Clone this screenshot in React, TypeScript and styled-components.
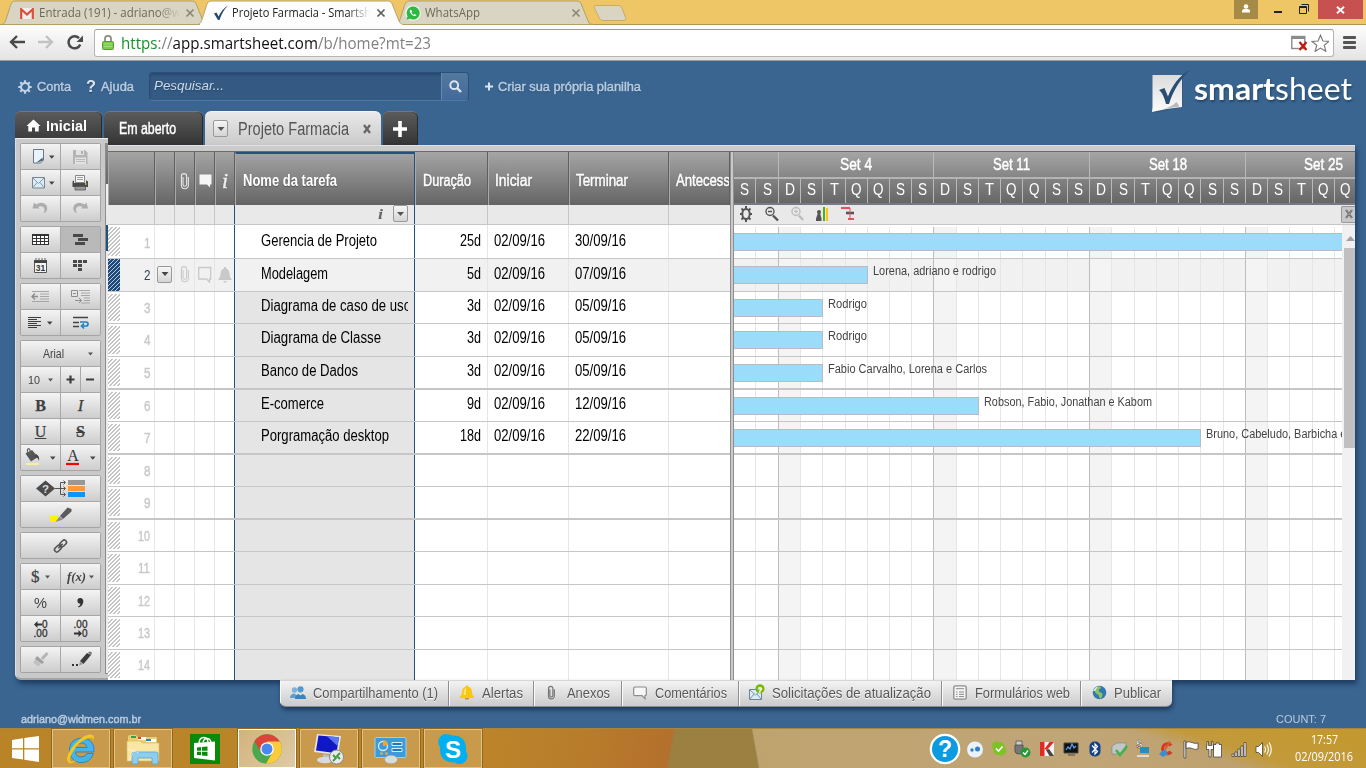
import React, { useLayoutEffect, useRef } from 'react';
import styled, { createGlobalStyle, css } from 'styled-components';

const ARIAL = '"Liberation Sans", Arial, sans-serif';
const SEGOE = '"Open Sans", "Noto Sans", sans-serif';
const SERIF = '"Liberation Serif", serif';

const Global = createGlobalStyle`
  *{box-sizing:border-box}
  html,body{margin:0;padding:0}
  body{width:1366px;height:768px;overflow:hidden;font-family:${ARIAL};font-size:12px}
  svg{display:block;flex:none}
`;

/* ---------- condensed text ---------- */
const FitBox = styled.span<{ $w: number }>`
  display: block;
  flex: none;
  width: ${p => p.$w}px;
  white-space: nowrap;
`;
const FitInner = styled.span<{ $size: number; $bold?: boolean; $italic?: boolean; $color?: string; $font?: string; $semi?: boolean }>`
  display: inline-block;
  transform-origin: 0 50%;
  line-height: 20px;
  font-family: ${p => p.$font || ARIAL};
  font-size: ${p => p.$size}px;
  font-weight: ${p => (p.$bold ? 700 : 400)};
  font-style: ${p => (p.$italic ? 'italic' : 'normal')};
  ${p => p.$semi && css`-webkit-text-stroke: .45px currentColor;`}
  ${p => p.$color && css`color: ${p.$color};`}
`;
type FitProps = { w: number; size: number; bold?: boolean; semi?: boolean; italic?: boolean; color?: string; font?: string; children: React.ReactNode };
function Fit({ w, size, bold, semi, italic, color, font, children }: FitProps) {
  const ref = useRef<HTMLSpanElement>(null);
  useLayoutEffect(() => {
    const el = ref.current;
    if (!el) return;
    el.style.transform = 'none';
    el.style.transform = `scaleX(${w / el.getBoundingClientRect().width})`;
  }, [w]);
  return (
    <FitBox $w={w}>
      <FitInner ref={ref} $size={size} $bold={bold} $semi={semi} $italic={italic} $color={color} $font={font}>{children}</FitInner>
    </FitBox>
  );
}

/* ---------- browser chrome ---------- */
const Screen = styled.div`
  width: 1366px; height: 768px; display: flex; flex-direction: column; overflow: hidden; background: #3a6591;
`;
const TabStrip = styled.div`
  height: 25px; flex: none; background: #efc666; display: flex; align-items: flex-start;
  border-bottom: 1px solid #b09350;
`;
const BrowserTab = styled.div<{ $w: number; $ml: number; $z?: number }>`
  display: grid; width: ${p => p.$w}px; height: 25px; margin-left: ${p => p.$ml}px; z-index: ${p => p.$z || 0};
  & > * { grid-area: 1 / 1; }
`;
const BrowserTabBody = styled.div<{ $pl: number; $gap: number }>`
  display: flex; align-items: center; padding: 1px 0 0 ${p => p.$pl}px; gap: ${p => p.$gap}px; z-index: 1;
`;
const FadeText = styled.div<{ $w: number; $fade?: boolean }>`
  width: ${p => p.$w}px; overflow: hidden; margin-top: -1px;
  ${p => p.$fade && css`mask-image: linear-gradient(90deg, #000 84%, transparent);`}
`;
const StripSpace = styled.div`flex: 1;`;
const WindowButtons = styled.div`display: flex; margin-right: 3px;`;
const UserButton = styled.div`
  width: 24px; height: 19px; background: #a68b47; display: flex; justify-content: center; margin-right: 10px;
`;
const CloseWindow = styled.div`width: 45px; height: 19px; background: #c75050; display: flex; align-items: center; justify-content: center;`;
const NavBar = styled.div`
  height: 36px; flex: none; display: flex; align-items: center; background: linear-gradient(#fdfdfd, #e4e4e4);
  border-bottom: 1px solid #9d9d9d; padding: 0 10px 0 9px;
`;
const NavIcons = styled.div`display: flex; gap: 13px; width: 85px;`;
const Omnibox = styled.div`
  width: 1240px; height: 28px; background: #fff; border: 1px solid #b4b4b4; border-top-color: #9b9b9b; border-radius: 3px;
  display: flex; align-items: center; padding: 0 4px 0 7px; margin-right: 9px;
`;
const UrlBox = styled.div`flex: 1; padding-left: 7px; color: #808080;`;
const Green = styled.span`color: #17922b;`;
const Black = styled.span`color: #111;`;

function TabShape({ w, active }: { w: number; active?: boolean }) {
  return (
    <svg width={w} height={25} viewBox={`0 0 ${w} 25`}>
      <path d={`M0 24.5 C4 24 4 22 5.500 18 L9 7 C10.500 2.500 11 1.500 14 1 H${w - 17} C${w - 14} 1 ${w - 13} 3 ${w - 12} 6 L${w - 6} 21 C${w - 5} 24 ${w - 3} 24.500 ${w} 24.500 Z`}
        fill={active ? '#fdfdfd' : '#dad5c3'} stroke={active ? '#b9a46b' : '#b39f6a'} />
      {active && <path d={`M3 24.500H${w - 3}`} stroke="#fdfdfd" strokeWidth="1.500" />}
    </svg>
  );
}
const TabX = ({ c = '#8c8877' }) => (
  <svg width="10" height="10" viewBox="0 0 10 10"><path d="M1.500 1.500L8.500 8.500M8.500 1.500L1.500 8.500" stroke={c} strokeWidth="1.700" /></svg>
);

function Browser() {
  return (
    <>
      <TabStrip>
        <BrowserTab $w={208} $ml={1}>
          <TabShape w={208} />
          <BrowserTabBody $pl={19} $gap={5}>
            <svg width="14" height="11" viewBox="0 0 14 11"><path d="M1 0h12v11H1z" fill="#f3efe8" /><path d="M1.200 11V1.200L7 6.500 12.800 1.200V11" fill="none" stroke="#d8503f" strokeWidth="2.200" /></svg>
            <FadeText $w={141} $fade><Fit w={142} size={12} font={SEGOE} color="#6b6858">Entrada (191) - adriano@w</Fit></FadeText>
            <TabX />
          </BrowserTabBody>
        </BrowserTab>
        <BrowserTab $w={208} $ml={-12} $z={2}>
          <TabShape w={208} active />
          <BrowserTabBody $pl={16} $gap={3}>
            <svg width="16" height="16" viewBox="0 0 16 16"><path d="M1 8.500L3.500 7.500 5.500 11.500C8 6.500 11 3 15 .5 11 4.500 8.500 9 6.500 15H5Z" fill="#23476d" /></svg>
            <FadeText $w={138} $fade><Fit w={139} size={12} font={SEGOE} color="#222">Projeto Farmacia - Smartsh</Fit></FadeText>
            <i /><TabX c="#5c5c5c" />
          </BrowserTabBody>
        </BrowserTab>
        <BrowserTab $w={199} $ml={-10}>
          <TabShape w={199} />
          <BrowserTabBody $pl={10} $gap={4}>
            <svg width="16" height="16" viewBox="0 0 16 16"><circle cx="8" cy="8" r="7.800" fill="#f2f5e8" /><path d="M1.500 14.500L2.500 11.200A6.500 6.500 0 1 1 5 13.700Z" fill="#2fb943" /><path d="M5.500 4.500c-1.500 1-.3 3.500 1.200 5s3.800 2.300 4.800.8l-1.700-1.300-.9.800c-1-.4-1.900-1.300-2.400-2.400l.8-.9Z" fill="#fff" /></svg>
            <FadeText $w={142}><Fit w={55} size={12} font={SEGOE} color="#6b6858">WhatsApp</Fit></FadeText>
            <TabX />
          </BrowserTabBody>
        </BrowserTab>
        <svg width="34" height="25" viewBox="0 0 34 25"><path d="M1.500 5.500H24.500Q27 5.500 28 8L32 18.500Q32 20.500 30 20.500H8.500Q6.500 20.500 5.500 18.500L0 7Q-.3 5.500 1.500 5.500Z" fill="#dad5c3" stroke="#c6ab63" /></svg>
        <StripSpace />
        <WindowButtons>
          <UserButton><svg width="10" height="19" viewBox="0 0 10 19"><circle cx="5" cy="6.500" r="2.300" fill="#fff" /><path d="M1 12.500V11Q1 9 3.200 9H6.800Q9 9 9 11V12.500Z" fill="#fff" /></svg></UserButton>
          <svg width="50" height="19" viewBox="0 0 50 19"><path d="M6 12h8" stroke="#222" strokeWidth="2" /><path d="M31.500 6.500h7v7h-7zM31 7.500h8" fill="none" stroke="#222" /><path d="M33.500 4.500H40.500V11.500" fill="none" stroke="#222" /></svg>
          <CloseWindow><svg width="9" height="8" viewBox="0 0 9 8"><path d="M1 .7L8 7.300M8 .7L1 7.300" stroke="#fff" strokeWidth="1.900" /></svg></CloseWindow>
        </WindowButtons>
      </TabStrip>
      <NavBar>
        <NavIcons>
          <svg width="16" height="14" viewBox="0 0 16 14"><path d="M8 1L2 7l6 6M2 7H16" fill="none" stroke="#4a4a4a" strokeWidth="2.400" /></svg>
          <svg width="16" height="14" viewBox="0 0 16 14"><path d="M8 1l6 6-6 6M14 7H0" fill="none" stroke="#c2c2c2" strokeWidth="2.400" /></svg>
          <svg width="17" height="15" viewBox="0 0 17 15"><path d="M13.200 9.500A6 6 0 1 1 12 3.200" fill="none" stroke="#4a4a4a" strokeWidth="2.500" /><path d="M16 .5V7H9.500Z" fill="#4a4a4a" /></svg>
        </NavIcons>
        <Omnibox>
          <svg width="12" height="15" viewBox="0 0 12 15"><path d="M3 7V3.800a3 3 0 0 1 6 0V7" fill="none" stroke="#8a8f86" strokeWidth="1.800" /><rect x=".5" y="6.500" width="11" height="8" rx="1" fill="#7cc94c" stroke="#5a9e33" /><path d="M2 9h8M2 11.500h8" stroke="#a4e07c" /></svg>
          <UrlBox><Fit w={310} size={16} font={SEGOE}><Green>https</Green>://<Black>app.smartsheet.com</Black>/b/home?mt=23</Fit></UrlBox>
          <svg width="38" height="18" viewBox="0 0 38 18"><rect x=".8" y="2.500" width="13" height="12" fill="#fff" stroke="#8b8b8b" strokeWidth="1.400" /><path d="M.5 3.500h13.600" stroke="#8b8b8b" strokeWidth="3" /><path d="M8.500 8l7 8M15.500 8l-7 8" stroke="#c4180c" strokeWidth="2.200" /><path d="M29.500 1.200L31.900 7l6 .4-4.600 3.900 1.500 6-5.300-3.200-5.300 3.200 1.500-6L21.100 7.400l6-.4Z" fill="#fff" stroke="#7d7d7d" strokeWidth="1.200" /></svg>
        </Omnibox>
        <svg width="13" height="13" viewBox="0 0 13 13"><path d="M1 1.500h11M1 6.500h11M1 11.500h11" stroke="#555" strokeWidth="2.800" strokeLinecap="round" /></svg>
      </NavBar>
    </>
  );
}

/* ---------- application header ---------- */
const AppHeader = styled.div`height: 50px; flex: none; display: flex; align-items: center; padding: 1px 14px 0 18px; text-shadow: 0 1px 1px #23466b;`;
const HeaderLink = styled.div<{ $mr: number; $gap: number }>`display: flex; align-items: center; gap: ${p => p.$gap}px; margin-right: ${p => p.$mr}px; color: #b9cbde;`;
const SearchBox = styled.div`
  display: flex; width: 320px; height: 29px; border: 1px solid #2b4f78; border-bottom-color: #4d79a5; border-radius: 4px; background: #345983;
  box-shadow: inset 0 2px 2px rgba(20, 45, 80, .35); padding-left: 4px; margin-right: 16px; overflow: hidden; justify-content: space-between;
`;
const SearchText = styled.div`padding-top: 3px;`;
const SearchButton = styled.div`width: 27px; background: linear-gradient(#54799f, #41699a); border-left: 1px solid #6488ae; display: flex; align-items: center; justify-content: center;`;
const Brand = styled.div`margin-left: auto; display: flex; align-items: center; height: 50px; padding-top: 6px;`;
const BrandText = styled.div`display: flex; color: #fff; padding-top: 2px; text-shadow: 1px 2px 2px #264768; height: 32px; align-items: center;`;

const Magnifier = ({ c = '#dbe5ef', s = 13 }) => (
  <svg width={s} height={s} viewBox="0 0 13 13"><circle cx="5.200" cy="5.200" r="3.900" fill="none" stroke={c} strokeWidth="2" /><path d="M8 8l4 4" stroke={c} strokeWidth="2.400" /></svg>
);
const Gear = ({ c = '#c3d3e4', s = 15 }) => (
  <svg width={s} height={s} viewBox="0 0 15 15">
    <circle cx="7.500" cy="7.500" r="4.300" fill="none" stroke={c} strokeWidth="2.200" />
    <path d="M7.500 .3V3M7.500 12V14.700M.3 7.500H3M12 7.500H14.700M2.400 2.400L4.300 4.300M10.700 10.700L12.600 12.600M2.400 12.600L4.300 10.700M10.700 4.300L12.600 2.400" stroke={c} strokeWidth="2.300" />
  </svg>
);

function Header() {
  return (
    <AppHeader>
      <HeaderLink $mr={15} $gap={5}><Gear s={14} /><Fit w={34} size={13} semi>Conta</Fit></HeaderLink>
      <HeaderLink $mr={15} $gap={5}><Fit w={10} size={16} bold color="#dbe5ef">?</Fit><Fit w={33} size={13} semi>Ajuda</Fit></HeaderLink>
      <SearchBox>
        <SearchText><Fit w={70} size={13} italic color="#cdd9e6">Pesquisar...</Fit></SearchText>
        <SearchButton><Magnifier /></SearchButton>
      </SearchBox>
      <HeaderLink $mr={0} $gap={5}>
        <svg width="8" height="9" viewBox="0 0 8 9"><path d="M4 .5v8M0 4.500h8" stroke="#dbe5ef" strokeWidth="2" /></svg>
        <Fit w={143} size={13} semi>Criar sua própria planilha</Fit>
      </HeaderLink>
      <Brand>
        <svg width="42" height="46" viewBox="0 0 42 46">
          <defs><linearGradient id="sheet" x1="0" y1="0" x2="0" y2="1"><stop offset="0" stopColor="#dcdcdc" /><stop offset="1" stopColor="#fbfbfb" /></linearGradient></defs>
          <path d="M2 9.500H31V40L1.500 46Z" fill="#24476b" opacity=".35" />
          <path d="M.5 8H30V40Q14 41.500 0 45Q.8 40 .5 36Z" fill="url(#sheet)" />
          <path d="M10 42Q19 40.500 24.500 35L27.500 39.500Q20 40.500 10 42Z" fill="#b9b9b9" />
          <path d="M7 23L12.500 21 16 29.500C20 19 27 8.500 38.500 2.500C28 12 21 24 17 37H14C12.500 31 10 25 7 23Z" fill="#2a4e73" />
        </svg>
        <BrandText><Fit w={81} size={31} bold font='Lato, sans-serif'>smart</Fit><Fit w={77} size={31} font='Lato, sans-serif'>sheet</Fit></BrandText>
      </Brand>
    </AppHeader>
  );
}

/* ---------- sheet tabs ---------- */
const SheetTabs = styled.div`height: 34px; flex: none; display: flex; padding-left: 15px; gap: 2px;`;
const SheetTab = styled.div<{ $w: number; $active?: boolean; $pl?: number; $pb?: number }>`
  width: ${p => p.$w}px; height: 34px; display: flex; align-items: center; padding: 0 0 ${p => p.$pb ?? 0}px ${p => p.$pl ?? 0}px;
  border-radius: 6px 6px 0 0; color: #fff;
  background: ${p => (p.$active ? 'linear-gradient(#e9e9e9, #cacaca)' : 'linear-gradient(#5b5b5b, #343434)')};
  border-top: 1px solid ${p => (p.$active ? '#f4f4f4' : '#777')};
  ${p => !p.$active && css`box-shadow: inset -1px 0 #2a2a2a;`}
`;
const MiniDrop = styled.div<{ $w?: number; $ml?: number; $mr?: number }>`
  width: ${p => p.$w || 15}px; height: 17px; border: 1px solid #999; border-radius: 2px; background: linear-gradient(#f6f6f6, #d4d4d4);
  display: flex; align-items: center; justify-content: center; margin: 0 ${p => p.$mr || 0}px 0 ${p => p.$ml || 0}px; flex: none;
`;
const Caret = ({ w = 7, c = '#555' }) => <svg width={w} height="4" viewBox="0 0 7 4"><path d="M0 0h7L3.500 4Z" fill={c} /></svg>;
const TabEnd = styled.span`width: 15px;`;
const TabClose = styled.svg`margin-left: 14px;`;

/* ---------- workspace ---------- */
const Workspace = styled.div`flex: none; height: 535px; display: flex; margin-left: 15px; width: 1340px; box-shadow: 2px 4px 5px rgba(10, 30, 60, .55); border-bottom-left-radius: 6px;`;
const Sidebar = styled.div`
  width: 93px; height: 542px; margin-top: -7px; z-index: 3; background: #c9c9c9; border-top: 1px solid #eee; border-left: 1px solid #dedede;
  border-bottom: 2px solid #a3a3a3; border-bottom-left-radius: 6px; display: flex; gap: 4px; padding: 4px 0 0 4px;
`;
const Groups = styled.div`display: flex; flex-direction: column; gap: 4px; width: 81px;`;
const Group = styled.div`border: 1px solid #a4a4a4; border-radius: 2px; background: #a8a8a8; display: flex; flex-direction: column; gap: 1px;`;
const GroupRow = styled.div`display: flex; gap: 1px; height: 25px;`;
const Tool = styled.div<{ $w?: number; $on?: boolean }>`
  width: ${p => p.$w || 39}px; height: 25px; background: ${p => (p.$on ? '#b9b9b9' : 'linear-gradient(#f4f4f4, #cdcdcd)')}; color: #444;
  display: flex; align-items: center; justify-content: center;
`;
const SideEdge = styled.div`
  width: 3px; height: 531px; border-left: 1px solid #8d8d8d; border-bottom: 1px solid #8d8d8d;
  background: linear-gradient(#8e8e8e 0, #666 41px, #f3f3f3 41px, #e6e6e6 82px, #24507c 82px, #24507c 108px, #ececec 108px);
`;

const art: Record<string, React.ReactNode> = {
  page: <><path d="M12.500 5.500h10v10.500l-3 3H12.500z" fill="#e8f3fb" stroke="#6d7780" /><path d="M15 19l7-2.500-.5-3Z" fill="#55606a" /></>,
  save: <><path d="M12 6h12l2.500 2.500V20H12z" fill="#b4b4b4" /><path d="M15 6h8v5h-8zM14 13.500h11V20H14z" fill="#e2e2e2" /><path d="M20 7h2v3h-2z" fill="#b0b0b0" /><path d="M15 15.500h9M15 17.500h9" stroke="#bbb" /></>,
  mail: <><path d="M11.500 7.500h12v10.500h-12z" fill="#dcedf8" stroke="#7b858e" /><path d="M12 8l5.500 5.500L23 8M12 17.500l4-5M23 17.500l-4-5" fill="none" stroke="#7f98ab" /></>,
  print: <><path d="M14.500 5.500h9v7h-9z" fill="#fafafa" stroke="#888" /><path d="M16 7.500h6M16 9.500h6" stroke="#999" /><path d="M11.500 12Q11.500 10.500 13 10.500V13H25V10.500Q27 10.500 27 12V17H11.500z" fill="#494949" /><path d="M14 16.500h10.500V20H14z" fill="#9a9a9a" stroke="#555" strokeWidth=".8" /><path d="M24 14h1.500" stroke="#d8d93a" strokeWidth="1.500" /></>,
  undo: <path d="M11.500 12.500L13 6.500 15 8.500Q22 4.500 25.500 9.500 28 14.500 22.500 17.500 25 12.500 21.500 10.500 19 9.800 17 10.800L18.500 12.500Z" fill="#adadad" />,
  redo: <path d="M27 12.500L25.500 6.500 23.500 8.500Q16.500 4.500 13 9.500 10.500 14.500 16 17.500 13.500 12.500 17 10.500 19.500 9.800 21.500 10.800L20 12.500Z" fill="#adadad" />,
  grid: <><path d="M11 7h17v11H11z" fill="#333" /><path d="M12 9h3v2h-3zM16 9h3v2h-3zM20 9h3v2h-3zM24 9h3v2h-3zM12 12h3v2h-3zM16 12h3v2h-3zM20 12h3v2h-3zM24 12h3v2h-3zM12 15h3v2h-3zM16 15h3v2h-3zM20 15h3v2h-3zM24 15h3v2h-3z" fill="#fff" /></>,
  gantt: <path d="M12 7h10v3H12zM17 11h10v3H17zM14 15h10v3H14z" fill="#484848" />,
  cal: <><path d="M13.500 7.500h12v12h-12z" fill="#f4f4f4" stroke="#555" /><path d="M13 7h13v3H13z" fill="#444" /><path d="M15 5v3M18 5v3M21 5v3M24 5v3" stroke="#666" /><text x="19.500" y="18.300" fontSize="8.500" fontWeight="700" textAnchor="middle" fill="#333" fontFamily="Liberation Sans">31</text></>,
  card: <path d="M12 7h4v3h-4zM17 7h4v3h-4zM22 7h4v3h-4zM12 11h4v3h-4zM17 11h4v3h-4zM17 15h4v3h-4z" fill="#484848" />,
  outdent: <><path d="M11 7.500h17M19 10h9M19 12.500h9M19 15h9M11 17.500h17" stroke="#a6a6a6" /><path d="M11 12.500h6M14 9.500l-3 3 3 3" stroke="#8c8c8c" fill="none" strokeWidth="1.400" /></>,
  indent: <><path d="M18 6.500h11M20 9h9M20 11.500h9M23 14h6M23 16.500h6M20 19h9" stroke="#a6a6a6" /><path d="M10.500 6.500h6v6h-6zM12 9.500h3M14 16.500h6M18 14l2.500 2.500L18 19" stroke="#8c8c8c" fill="none" /></>,
  left: <path d="M7 7.500h13M7 9.500h9M7 11.500h13M7 13.500h9M7 15.500h13M7 17.500h9" stroke="#3d3d3d" />,
  wrap: <><path d="M12 7.500h15M12 12.500h6M12 16.500h6" stroke="#444" strokeWidth="1.300" /><path d="M19 12h6q2 0 2 2t-2 2h-4M23 13.500L20.500 16l2.500 2.500" stroke="#2183c4" strokeWidth="1.700" fill="none" /></>,
  plus: <path d="M5.500 12.500h8M9.500 8.500v8" stroke="#3d3d3d" strokeWidth="2.200" />,
  minus: <path d="M5 12.500h8" stroke="#3d3d3d" strokeWidth="2" />,
  fill: <><path d="M4.500 8.500L11 5l6 7-7 4.500Z" fill="#555" /><path d="M9 10V5.500Q8.500 2.500 6.500 4.500V8" fill="none" stroke="#666" strokeWidth="1.200" /><path d="M15 9q4 2 3 7-1-4-4-4Z" fill="#444" /><path d="M5 19h13" stroke="#f6f29a" strokeWidth="2" /></>,
  font: <><text x="12" y="15.500" fontSize="16" textAnchor="middle" fill="#333" fontFamily="Liberation Serif">A</text><path d="M5 19h13" stroke="#f00" strokeWidth="2.200" /></>,
  link: <g transform="rotate(-45 39.500 13)" fill="none" stroke="#555" strokeWidth="1.600"><rect x="32" y="10.700" width="7.500" height="4.600" rx="2.300" /><rect x="39.500" y="10.700" width="7.500" height="4.600" rx="2.300" /><path d="M36.500 13h6" /></g>,
  flow: <><path d="M15 12.500L24.500 4.500 34 12.500 24.500 20.500Z" fill="#4c4c4c" /><text x="24.500" y="16.500" fontSize="11.500" fontWeight="700" textAnchor="middle" fill="#ddd" fontFamily="Liberation Sans">?</text><path d="M34 12.500h10M44 6.500h-4.500v12H44M42.500 4.500l2 2-2 2M42.500 10.500l2 2-2 2M42.500 16.500l2 2-2 2" fill="none" stroke="#555" /><path d="M47 4h17v5H47z" fill="#989898" /><path d="M47 10h17v5H47z" fill="#f93" /><path d="M47 16h17v5H47z" fill="#0c96f7" /></>,
  marker: <><path d="M29 14h8v6h-8z" fill="#fff200" /><path d="M39 14L46.500 5.500 50.500 7V9.500L42 17Z" fill="#5a5a5a" /><path d="M38.500 14.500l3.500 3-7.500 2.500Z" fill="#8b8b8b" /></>,
  brush: <><path d="M20 11l5.500-6 2 2L22 13Z" fill="#b3b3b3" /><path d="M16 9l7 6-2 2-7-5Z" fill="#9e9e9e" /><path d="M14.500 12l5.500 5-3 2.500-5-4Z" fill="#c0c0c0" /></>,
  pencil: <><path d="M19 14l7-8 4 2-7.500 9Z" fill="#3c3c3c" /><path d="M27 5.500l2-1 2 1-1 3Z" fill="#777" /><path d="M18 18.500L19 14.500l3 2.500Z" fill="#999" /><path d="M11 18h2M15 18h2" stroke="#333" strokeWidth="2" /></>,
};
const Icon = ({ n, w = 39 }: { n: string; w?: number }) => <svg width={w} height="25" viewBox={`0 0 ${w} 25`}>{art[n]}</svg>;
const IconCaret = ({ n, x = 28 }: { n: string; x?: number }) => (
  <svg width="39" height="25" viewBox="0 0 39 25">{art[n]}<path d={`M${x} 11.500h5.500l-2.750 3.200Z`} fill="#444" /></svg>
);
const Glyph = styled.span<{ $size: number; $b?: boolean; $i?: boolean; $line?: string }>`
  font: ${p => (p.$i ? 'italic' : 'normal')} ${p => (p.$b ? 700 : 400)} ${p => p.$size}px/24px ${SERIF};
  color: #3f3f3f; text-decoration: ${p => p.$line || 'none'}; -webkit-text-stroke: .25px #3f3f3f;
`;
const Decimals = styled.div`display: flex; flex-direction: column; align-items: flex-end; font: 10px/9px ${ARIAL}; color: #333; height: 18px; -webkit-text-stroke: .3px #333;`;
const DecLine = styled.span`display: flex; align-items: center; height: 9px;`;
const Spaced = styled.div<{ $gap: number; $pl: number }>`display: flex; width: 100%; align-items: center; gap: ${p => p.$gap}px; padding-left: ${p => p.$pl}px;`;
const Arrow = ({ flip }: { flip?: boolean }) => <svg width="8" height="7" viewBox="0 0 8 7"><path d={flip ? 'M8 3.500L4.500 0v2.500H0v2h4.500V7Z' : 'M0 3.500L3.500 0v2.500H8v2H3.500V7Z'} fill="#333" /></svg>;

function Tools() {
  return (
    <Sidebar>
      <Groups>
        <Group>
          <GroupRow><Tool><IconCaret n="page" /></Tool><Tool><Icon n="save" /></Tool></GroupRow>
          <GroupRow><Tool><IconCaret n="mail" /></Tool><Tool><Icon n="print" /></Tool></GroupRow>
          <GroupRow><Tool><Icon n="undo" /></Tool><Tool><Icon n="redo" /></Tool></GroupRow>
        </Group>
        <Group>
          <GroupRow><Tool><Icon n="grid" /></Tool><Tool $on><Icon n="gantt" /></Tool></GroupRow>
          <GroupRow><Tool><Icon n="cal" /></Tool><Tool><Icon n="card" /></Tool></GroupRow>
        </Group>
        <Group>
          <GroupRow><Tool><Icon n="outdent" /></Tool><Tool><Icon n="indent" /></Tool></GroupRow>
          <GroupRow><Tool><IconCaret n="left" x={26} /></Tool><Tool><Icon n="wrap" /></Tool></GroupRow>
        </Group>
        <Group>
          <GroupRow><Tool $w={79}><Spaced $gap={24} $pl={22}><Fit w={21} size={12}>Arial</Fit><Caret w={5} /></Spaced></Tool></GroupRow>
          <GroupRow><Tool><Spaced $gap={8} $pl={7}><Fit w={12} size={11.5}>10</Fit><Caret w={5} /></Spaced></Tool><Tool $w={19}><Icon n="plus" w={19} /></Tool><Tool $w={19}><Icon n="minus" w={19} /></Tool></GroupRow>
          <GroupRow><Tool><Glyph $size={16} $b>B</Glyph></Tool><Tool><Glyph $size={17} $i>I</Glyph></Tool></GroupRow>
          <GroupRow><Tool><Glyph $size={16} $line="underline">U</Glyph></Tool><Tool><Glyph $size={16} $b $line="line-through">S</Glyph></Tool></GroupRow>
          <GroupRow><Tool><IconCaret n="fill" x={29} /></Tool><Tool><IconCaret n="font" x={29} /></Tool></GroupRow>
        </Group>
        <Group>
          <GroupRow><Tool $w={79}><Icon n="flow" w={79} /></Tool></GroupRow>
          <GroupRow><Tool $w={79}><Icon n="marker" w={79} /></Tool></GroupRow>
        </Group>
        <Group><GroupRow><Tool $w={79}><Icon n="link" w={79} /></Tool></GroupRow></Group>
        <Group>
          <GroupRow>
            <Tool><Spaced $gap={5} $pl={10}><Glyph $size={17}>$</Glyph><Caret w={5} /></Spaced></Tool>
            <Tool><Spaced $gap={3} $pl={6}><Fit w={19} size={13} bold italic font={SERIF}>f(x)</Fit><Caret w={5} /></Spaced></Tool>
          </GroupRow>
          <GroupRow><Tool><Fit w={13} size={15}>%</Fit></Tool><Tool><svg width="7" height="10" viewBox="0 0 7 10"><path d="M3.200 0A3 3 0 0 1 6.300 3.300Q6.300 8 1.500 9.500L1 8.800Q3.500 7.500 3.500 5.800A2.900 2.900 0 1 1 3.200 0Z" fill="#333" /></svg></Tool></GroupRow>
          <GroupRow>
            <Tool><Decimals><DecLine><Arrow />0</DecLine><DecLine>.00</DecLine></Decimals></Tool>
            <Tool><Decimals><DecLine>.00</DecLine><DecLine><Arrow flip />0</DecLine></Decimals></Tool>
          </GroupRow>
        </Group>
        <Group><GroupRow><Tool><Icon n="brush" /></Tool><Tool><Icon n="pencil" /></Tool></GroupRow></Group>
      </Groups>
      <SideEdge />
    </Sidebar>
  );
}

/* ---------- grid ---------- */
const Sheet = styled.div`width: 1247px; height: 535px; display: flex; flex-direction: column; background: #fff; z-index: 2;`;
const SheetTop = styled.div`flex: none; background: #cbcbcb; border-top: 1px solid #e2e2e2; border-bottom: 1px solid #6a6c66; height: 7px;`;
const Panes = styled.div`display: flex; height: 528px;`;
const GridPane = styled.div`width: 622px; overflow: hidden; display: flex; flex-direction: column;`;
const HeadRow = styled.div`display: flex; height: 53px; flex: none; background: linear-gradient(#a5a5a5, #646464);`;
const HeadCell = styled.div<{ $w: number; $pl?: number; $sel?: boolean }>`
  width: ${p => p.$w}px; flex: none; display: flex; align-items: center; padding: 4px 0 0 ${p => p.$pl || 0}px; color: #fff; text-shadow: 0 1px 1px #555; overflow: hidden;
  border-left: 1px solid #a9a9a9; border-right: 1px solid #5f5f5f;
  ${p => p.$sel && css`border-top: 2px solid #24507c; border-right: 1px solid #24507c; padding-top: 2px;`}
  ${p => !p.$pl && css`justify-content: center;`}
`;
const GridRow = styled.div<{ $h: number; $hot?: boolean; $thick?: boolean; $last?: boolean }>`
  display: flex; height: ${p => p.$h}px; flex: none; background: ${p => (p.$hot ? '#f1f1f1' : '#fff')};
  border-bottom: ${p => (p.$last ? 0 : p.$thick ? 2 : 1)}px solid #c6c6c6;
`;
const FilterRow = styled.div`display: flex; height: 20px; flex: none; background: #e9e9e9; border-bottom: 1px solid #c6c6c6;`;
const Cell = styled.div<{ $w: number; $line?: string; $bg?: string; $right?: boolean; $pad?: number; $center?: boolean; $up?: boolean }>`
  width: ${p => p.$w}px; flex: none; overflow: hidden; border-right: 1px solid ${p => p.$line || '#e6e6e6'}; background: ${p => p.$bg || 'transparent'};
  display: flex; align-items: center; justify-content: ${p => (p.$right ? 'flex-end' : p.$center ? 'center' : 'flex-start')};
  padding: 0 ${p => (p.$right ? p.$pad || 0 : 0)}px ${p => (p.$up ? 4 : 2)}px ${p => (p.$right ? 0 : p.$pad || 0)}px; color: #000;
`;
const NumCell = styled.div`width: 47px; flex: none; border-right: 1px solid #e6e6e6; display: flex; justify-content: space-between; align-items: center; padding-right: 4px;`;
const NumWrap = styled.div<{ $first: boolean }>`padding-top: ${p => (p.$first ? 3 : 0)}px;`;
const Hatch = styled.div<{ $on?: boolean }>`
  width: 12px; align-self: stretch; margin: ${p => (p.$on ? 0 : '2px 0')};
  background: ${p => (p.$on ? 'repeating-linear-gradient(135deg,#1d4a78 0 2px,#b9cbe0 2px 2.828px)' : 'repeating-linear-gradient(135deg,#c4c4c4 0 .8px,#fff .8px 2.828px)')};
`;
const NameClip = styled.div`width: 147px; overflow: hidden;`;
const Divider = styled.div`width: 4px; flex: none; background: #c9c9c9; border-left: 1px solid #8f8f8f; border-right: 1px solid #8f8f8f;`;

const Clip = ({ c }: { c: string }) => (
  <svg width="10" height="18" viewBox="0 0 10 18"><path d="M3 5v7.500a1.800 1.800 0 0 0 3.600 0V4.200a2.600 2.600 0 0 0-5.200 0v9a3.500 3.500 0 0 0 7 0V5" fill="none" stroke={c} strokeWidth="1.100" /></svg>
);

type Task = { name?: string; nw?: number; d?: string; start?: string; end?: string; bar?: number; who?: string; ww?: number; h: number; thick?: boolean };
const tasks: Task[] = [
  { name: 'Gerencia de Projeto', nw: 116, d: '25d', start: '02/09/16', end: '30/09/16', bar: 620, h: 34 },
  { name: 'Modelagem', nw: 67, d: '5d', start: '02/09/16', end: '07/09/16', bar: 134, who: 'Lorena, adriano e rodrigo', ww: 123, h: 33 },
  { name: 'Diagrama de caso de uso', nw: 150, d: '3d', start: '02/09/16', end: '05/09/16', bar: 89, who: 'Rodrigo', ww: 39, h: 32 },
  { name: 'Diagrama de Classe', nw: 120, d: '3d', start: '02/09/16', end: '05/09/16', bar: 89, who: 'Rodrigo', ww: 39, h: 33 },
  { name: 'Banco de Dados', nw: 97, d: '3d', start: '02/09/16', end: '05/09/16', bar: 89, who: 'Fabio Carvalho, Lorena e Carlos', ww: 159, h: 33, thick: true },
  { name: 'E-comerce', nw: 63, d: '9d', start: '02/09/16', end: '12/09/16', bar: 245, who: 'Robson, Fabio, Jonathan e Kabom', ww: 168, h: 32 },
  { name: 'Porgramação desktop', nw: 128, d: '18d', start: '02/09/16', end: '22/09/16', bar: 467, who: 'Bruno, Cabeludo, Barbicha e Carlos', ww: 175, h: 33, thick: true },
  { h: 32 }, { h: 33, thick: true }, { h: 32 }, { h: 33 }, { h: 32 }, { h: 33 }, { h: 30 },
];
const BLUE = '#24507c';

function GridSide() {
  return (
    <GridPane>
      <HeadRow>
        <HeadCell $w={47} /><HeadCell $w={20} />
        <HeadCell $w={20}><Clip c="#e6e6e6" /></HeadCell>
        <HeadCell $w={20}><svg width="13" height="14" viewBox="0 0 13 14"><path d="M.5.5h12v10H11v3l-3-3H.5Z" fill="#f5f5f5" /></svg></HeadCell>
        <HeadCell $w={20}><Fit w={6} size={22} italic font={SERIF} semi color="#eee">i</Fit></HeadCell>
        <HeadCell $w={180} $pl={7} $sel><Fit w={94} size={16} bold>Nome da tarefa</Fit></HeadCell>
        <HeadCell $w={73} $pl={7}><Fit w={48} size={16} semi>Duração</Fit></HeadCell>
        <HeadCell $w={81} $pl={6}><Fit w={37} size={16} semi>Iniciar</Fit></HeadCell>
        <HeadCell $w={100} $pl={6}><Fit w={52} size={16} semi>Terminar</Fit></HeadCell>
        <HeadCell $w={61} $pl={6}><Fit w={54} size={16} semi>Antecess</Fit></HeadCell>
      </HeadRow>
      <FilterRow>
        <Cell $w={47} $line="#c6c6c6" /><Cell $w={20} $line="#c6c6c6" /><Cell $w={20} $line="#c6c6c6" /><Cell $w={20} $line="#c6c6c6" /><Cell $w={20} $line={BLUE} />
        <Cell $w={180} $line={BLUE} $right $pad={6}><Fit w={5} size={15} bold italic font={SERIF} color="#666">i</Fit><MiniDrop $ml={10}><Caret /></MiniDrop></Cell>
        <Cell $w={73} $line="#c6c6c6" /><Cell $w={81} $line="#c6c6c6" /><Cell $w={100} $line="#c6c6c6" /><Cell $w={80} />
      </FilterRow>
      {tasks.map((t, i) => {
        const hot = i === 1;
        const up = i > 1;
        return (
          <GridRow key={i} $h={t.h} $hot={hot} $thick={t.thick} $last={i === 13}>
            <NumCell>
              <Hatch $on={hot} />
              <NumWrap $first={i === 0}><Fit w={i > 8 ? 12 : 6.500} size={15} semi={!hot} color={hot ? '#33415c' : '#c9c9c9'}>{i + 1}</Fit></NumWrap>
            </NumCell>
            <Cell $w={20} $center>{hot && <MiniDrop><Caret w={8} c="#444" /></MiniDrop>}</Cell>
            <Cell $w={20} $center>{hot && <Clip c="#c9c9c9" />}</Cell>
            <Cell $w={20} $center>{hot && <svg width="14" height="17" viewBox="0 0 14 17"><path d="M.7 1.500h12v11.500H11.500v3l-3-3H.7Z" fill="none" stroke="#c9c9c9" strokeWidth="1.300" /></svg>}</Cell>
            <Cell $w={20} $line={BLUE} $center>{hot && <svg width="14" height="17" viewBox="0 0 14 17"><path d="M6 1h2v1.500Q11.500 3.500 11.500 8 11.500 11.500 13.500 13V14H.5V13Q2.500 11.500 2.500 8 2.500 3.500 6 2.500ZM5.500 15h3v1.500h-3Z" fill="#c9c9c9" /></svg>}</Cell>
            <Cell $w={180} $line={BLUE} $pad={26} $up={up} $bg={i > 1 ? '#e5e5e5' : undefined}>
              {t.name && <NameClip><Fit w={t.nw!} size={16}>{t.name}</Fit></NameClip>}
            </Cell>
            <Cell $w={73} $right $pad={6} $up={up}>{t.d && <Fit w={t.d.length === 3 ? 21 : 14} size={16}>{t.d}</Fit>}</Cell>
            <Cell $w={81} $pad={6} $up={up}>{t.start && <Fit w={51} size={16}>{t.start}</Fit>}</Cell>
            <Cell $w={100} $pad={6} $up={up}>{t.end && <Fit w={51} size={16}>{t.end}</Fit>}</Cell>
            <Cell $w={80} />
          </GridRow>
        );
      })}
    </GridPane>
  );
}

/* ---------- gantt ---------- */
const edges = [734, 756, 779, 801, 823, 846, 868, 890, 912, 934, 957, 979, 1001, 1023, 1046, 1068, 1090, 1112, 1135, 1157, 1179, 1201, 1224, 1246, 1268, 1290, 1313, 1335, 1357];
const letters = 'SSDSTQQSSDSTQQSSDSTQQSSDSTQQ'.split('');
const letterWidth: Record<string, number> = { S: 9, D: 10, T: 9, Q: 10.5 };

const GanttPane = styled.div`width: 621px; overflow: hidden; display: flex; flex-direction: column;`;
const Weeks = styled.div`display: flex; height: 27px; flex: none; background: linear-gradient(#a5a5a5, #858585); border-bottom: 2px solid #b4b4b4;`;
const Week = styled.div<{ $w: number }>`width: ${p => p.$w}px; flex: none; border-right: 1px solid #b9b9b9; display: flex; justify-content: center; align-items: center; color: #fff;`;
const Days = styled.div`display: flex; height: 26px; flex: none; background: linear-gradient(#828282, #666); border-bottom: 2px solid #777986;`;
const Day = styled.div<{ $w: number }>`width: ${p => p.$w}px; flex: none; border-right: 1px solid #b9b9b9; display: flex; justify-content: center; align-items: center; color: #fff; padding-bottom: 2px;`;
const GanttTools = styled.div`height: 20px; flex: none; display: flex; align-items: center; background: #e9e9e9; border-bottom: 1px solid #c6c6c6; padding: 0 0 1px 6px;`;
const GanttBody = styled.div`display: flex; height: 455px;`;
const Chart = styled.div`width: 608px; overflow: hidden;`;
const ChartRow = styled(GridRow)`display: grid; grid-template-rows: 100%; overflow: hidden; & > * { grid-area: 1 / 1; }`;
const DayLayer = styled.div<{ $first?: boolean }>`display: flex; padding-top: ${p => (p.$first ? 2 : 0)}px;`;
const DayCell = styled.div<{ $w: number; $sun?: boolean; $week?: boolean }>`
  width: ${p => p.$w}px; flex: none; border-right: 1px solid ${p => (p.$week ? '#bdbdbd' : '#e6e6e6')}; background: ${p => (p.$sun ? '#f4f4f4' : 'transparent')};
`;
const BarLayer = styled.div<{ $first?: boolean }>`display: flex; align-items: flex-start; gap: 5px; padding-top: ${p => (p.$first ? 8 : 7)}px; z-index: 1;`;
const Bar = styled.div<{ $w: number }>`width: ${p => p.$w}px; height: 18px; flex: none; background: #9adcf9; border: 1px solid #b9bcbe; border-left: 0;`;
const Label = styled.div`margin-top: -5px;`;
const ScrollTrack = styled.div`width: 13px; background: #f1f1f1; display: flex; flex-direction: column; align-items: flex-end; padding: 11px 0 0;`;
const ScrollArrow = styled.div`width: 9px; height: 12px; display: flex; justify-content: center;`;
const ScrollThumb = styled.div`width: 11px; height: 200px; background: #c0c0c0;`;
const CloseGantt = styled.div`width: 14px; height: 17px; margin-left: auto; border: 1px solid #999; border-right: 0; border-radius: 2px 0 0 2px; background: #c8c8c8; display: flex; align-items: center; justify-content: center;`;

function Gantt() {
  return (
    <GanttPane>
      <Weeks>
        <Week $w={45} />
        <Week $w={155}><Fit w={32} size={16} semi>Set 4</Fit></Week>
        <Week $w={156}><Fit w={37} size={16} semi>Set 11</Fit></Week>
        <Week $w={156}><Fit w={38} size={16} semi>Set 18</Fit></Week>
        <Week $w={156}><Fit w={39} size={16} semi>Set 25</Fit></Week>
      </Weeks>
      <Days>{letters.map((l, i) => <Day key={i} $w={edges[i + 1] - edges[i]}><Fit w={letterWidth[l]} size={16}>{l}</Fit></Day>)}</Days>
      <GanttTools>
        <svg width="118" height="18" viewBox="0 0 118 18">
          <ellipse cx="6" cy="9" rx="3.700" ry="5" fill="none" stroke="#555" strokeWidth="2" />
          <path d="M6 1v3M6 14v3M0 9h2.500M9.500 9H12M1.500 3.500l2 2M8.500 12.500l2 2M1.500 14.500l2-2M8.500 5.500l2-2" stroke="#555" strokeWidth="2" />
          <circle cx="30" cy="6.500" r="4" fill="none" stroke="#555" strokeWidth="1.400" /><path d="M33 10.500l5 5" stroke="#555" strokeWidth="2.400" /><path d="M28 6.500h4" stroke="#555" strokeWidth="1.500" />
          <circle cx="56" cy="6.500" r="4" fill="none" stroke="#bdbdbd" strokeWidth="1.400" /><path d="M59 10.500l4 4.500" stroke="#bdbdbd" strokeWidth="2.400" /><path d="M54 6.500h4M56 4.500v4" stroke="#bdbdbd" strokeWidth="1.200" />
          <circle cx="79" cy="7" r="2" fill="#555" /><path d="M78 8h2l1.500 5.500v2.500h-5.500v-2.500Z" fill="#555" /><path d="M83 2h2v14h-2z" fill="#4fae1b" /><path d="M86 3h2v13h-2z" fill="#fbc31a" />
          <path d="M106 8h8" stroke="#555" strokeWidth="2.600" />
          <path d="M101 3h9" fill="none" stroke="#e8505b" strokeWidth="2.200" /><path d="M110 3v11" stroke="#e8505b" /><path d="M108 14h6" stroke="#e8505b" strokeWidth="2" />
        </svg>
        <CloseGantt><svg width="8" height="10" viewBox="0 0 8 10"><path d="M1 1l6 8M7 1L1 9" stroke="#555" strokeWidth="2" /><path d="M1 1l6 8M7 1L1 9" stroke="#ddd" strokeWidth=".5" /></svg></CloseGantt>
      </GanttTools>
      <GanttBody>
        <Chart>
          {tasks.map((t, i) => (
            <ChartRow key={i} $h={t.h} $hot={i === 1} $thick={t.thick} $last={i === 13}>
              <DayLayer $first={i === 0}>
                {letters.map((l, d) => <DayCell key={d} $w={edges[d + 1] - edges[d]} $sun={l === 'D'} $week={letters[d + 1] === 'D'} />)}
              </DayLayer>
              {t.bar && <BarLayer $first={i === 0}><Bar $w={t.bar} />{t.who && <Label><Fit w={t.ww!} size={12.5} color="#444">{t.who}</Fit></Label>}</BarLayer>}
            </ChartRow>
          ))}
        </Chart>
        <ScrollTrack>
          <ScrollArrow><svg width="9" height="5" viewBox="0 0 9 5"><path d="M0 5h9L4.500 0Z" fill="#a0a0a0" /></svg></ScrollArrow>
          <ScrollThumb />
        </ScrollTrack>
      </GanttBody>
    </GanttPane>
  );
}

/* ---------- bottom tabs ---------- */
const BottomArea = styled.div`height: 48px; flex: none; display: grid; & > * { grid-area: 1 / 1; }`;
const BottomTabs = styled.div`
  margin-left: 280px; width: 892px; height: 27px; display: flex; background: linear-gradient(#f3f3f3, #cbcbcb); border-bottom: 1px solid #8b8b8b;
  border-radius: 0 0 6px 6px; box-shadow: 1px 3px 4px rgba(10, 30, 60, .6); color: #575757; z-index: 2; overflow: hidden; border-top: 1px solid #d5d5d5;
`;
const BottomTab = styled.div<{ $w: number; $pl: number; $gap: number }>`
  width: ${p => p.$w}px; flex: none; border-right: 1px solid #8f8f8f; box-shadow: inset 1px 0 #fafafa; display: flex; align-items: center; padding: 0 0 2px ${p => p.$pl}px; gap: ${p => p.$gap}px; text-shadow: 0 1px #fff;
`;
const StatusLine = styled.div`align-self: end; display: flex; justify-content: space-between; padding: 0 40px 0 21px; margin-bottom: -1px; color: #b9cbde;`;

function Bottom() {
  return (
    <BottomArea>
      <BottomTabs>
        <BottomTab $w={169} $pl={10} $gap={7}>
          <svg width="16" height="14" viewBox="0 0 16 14"><circle cx="4.500" cy="4" r="2.700" fill="#7fb3da" /><path d="M0 12Q0 8 4 7.500 7 8 7 12Z" fill="#5f9fd0" /><circle cx="10.500" cy="3.300" r="3.100" fill="#4f9ad1" /><path d="M5 13Q5 9 8.500 8L10.500 9.500 12.500 8Q16 9 16 13Z" fill="#3385c4" /></svg>
          <Fit w={125} size={14}>Compartilhamento (1)</Fit>
        </BottomTab>
        <BottomTab $w={85} $pl={11} $gap={8}>
          <svg width="14" height="15" viewBox="0 0 14 15"><path d="M6 .5h2V1.500Q12 2.500 12 7.500 12 10.500 14 11.500V13H0V11.500Q2 10.500 2 7.500 2 2.500 6 1.500Z" fill="#f6c814" /><path d="M5 13h4v1.500H5Z" fill="#d09a10" /><path d="M4 5Q4.500 3.500 6 3v7H3.500Z" fill="#fde66c" /></svg>
          <Fit w={41} size={14}>Alertas</Fit>
        </BottomTab>
        <BottomTab $w={88} $pl={13} $gap={11}><svg width="9" height="15" viewBox="0 0 10 18"><path d="M3 5v7.500a1.800 1.800 0 0 0 3.600 0V4.200a2.600 2.600 0 0 0-5.200 0v9a3.500 3.500 0 0 0 7 0V5" fill="none" stroke="#777" strokeWidth="1.400" /></svg><Fit w={43} size={14}>Anexos</Fit></BottomTab>
        <BottomTab $w={117} $pl={11} $gap={8}><svg width="14" height="14" viewBox="0 0 14 14"><path d="M2 1h10q1.300 0 1.300 1.300v6Q13.300 9.700 12 9.700v3L9 9.700H2Q.7 9.700.7 8.300v-6Q.7 1 2 1Z" fill="#f7f7f7" stroke="#8c8c8c" strokeWidth="1.200" /></svg><Fit w={72} size={14}>Comentários</Fit></BottomTab>
        <BottomTab $w={203} $pl={10} $gap={7}>
          <svg width="16" height="17" viewBox="0 0 16 17"><path d="M.5 5.500h12v10H.5z" fill="#dcecf6" stroke="#6f8597" /><path d="M1 6l5.500 5L12 6M1 15l4-5M12 15l-4-5" fill="none" stroke="#7b93a6" /><circle cx="11" cy="4.800" r="4.600" fill="#76b900" /><text x="11" y="7.800" fontSize="8" fontWeight="700" textAnchor="middle" fill="#fff" fontFamily="Liberation Sans">?</text></svg>
          <Fit w={159} size={14}>Solicitações de atualização</Fit>
        </BottomTab>
        <BottomTab $w={139} $pl={11} $gap={8}><svg width="14" height="15" viewBox="0 0 14 15"><rect x=".8" y=".8" width="12.400" height="13.400" rx="1.500" fill="#f4f4f4" stroke="#8a8a8a" strokeWidth="1.300" /><path d="M3 3.700h8M3 7h1.500M6 7h5M3 9.300h1.500M6 9.300h5M3 11.600h1.500M6 11.600h5" stroke="#8a8a8a" /></svg><Fit w={95} size={14}>Formulários web</Fit></BottomTab>
        <BottomTab $w={92} $pl={11} $gap={7}><svg width="15" height="15" viewBox="0 0 15 15"><circle cx="7.500" cy="7.500" r="6.800" fill="#2f78b8" /><path d="M2 4Q4 1 8 1.200L9 3 6.500 5 7.500 7 10.500 8.500 10 12 8 14 6.500 10 3.500 8Z" fill="#8fc35a" /><path d="M1 6Q3 2 6 1.500L3 6Z" fill="#d6edf8" /></svg><Fit w={47} size={14}>Publicar</Fit></BottomTab>
      </BottomTabs>
      <StatusLine><Fit w={120} size={11.5} semi>adriano@widmen.com.br</Fit><Fit w={50} size={11.5}>COUNT: 7</Fit></StatusLine>
    </BottomArea>
  );
}

/* ---------- taskbar ---------- */
const Taskbar = styled.div`
  height: 40px; flex: none; display: flex; align-items: center; border-top: 1px solid #a8853f;
  background:
    linear-gradient(17.7deg, transparent 36px, #c39a3a 51px, #c3982f 110px) right / 236px 100% no-repeat,
    linear-gradient(80deg, transparent 18px, #bfa36f 19.5px, #c0a577 350px, #bb9c64 100%) right / 626px 100% no-repeat,
    linear-gradient(100deg, #b98428 0, #bc8429 480px, #b87d2b 570px, #b4702c 663px, #9c8042 665px, #98803f 100%);
`;
const TaskItem = styled.div<{ $w: number; $ml?: number; $state?: 'open' | 'active' }>`
  width: ${p => p.$w}px; height: 39px; margin-left: ${p => p.$ml || 0}px; display: flex; align-items: center; justify-content: center; flex: none;
  ${p => p.$state === 'open' && css`background: rgba(215, 175, 110, .5); border: 1px solid #dfc18a; box-shadow: 0 0 0 1px #936a1d;`}
  ${p => p.$state === 'active' && css`background: linear-gradient(135deg, #d2b27b, #dfcba6); border: 1px solid #fff; box-shadow: 0 0 0 1px #936a1d;`}
`;
const Tray = styled.div`margin-left: auto; display: flex; align-items: center;`;
const Clock = styled.div`width: 84px; display: flex; flex-direction: column; align-items: center; color: #fff; & > * { height: 17px; line-height: 17px; } margin-top: -3px;`;

function WindowsBar() {
  return (
    <Taskbar>
      <TaskItem $w={50}><svg width="27" height="26" viewBox="0 0 27 26"><path d="M0 4L11 2.300V12.300H0ZM12.300 2.100L27 0V12.300H12.300ZM0 13.500H11V23.600L0 22ZM12.300 13.500H27V26L12.300 23.800Z" fill="#fff" /></svg></TaskItem>
      <TaskItem $w={58} $ml={2} $state="open">
        <svg width="32" height="32" viewBox="0 0 32 32"><path d="M28.500 20.500H22Q20.500 24 16.500 24 11 24 10.500 19H29Q29.500 12 26.500 9 23 5 17 5 6 5.500 4.500 15 4 27 14 29.500 25 31 28.500 20.500ZM10.500 14.500Q12 10 16.500 10 21 10 22 14.500Z" fill="#45b4ea" stroke="#1b7fc2" strokeWidth=".8" /><path d="M4 30Q-1 27 6 16 14 4 24 1.500 31 .5 28 8 28 3.500 23.500 5 14 8 8 18.500 3 27.500 6 28.500 9 28.500 12 27 7 31 4 30Z" fill="#f5c61b" /></svg>
      </TaskItem>
      <TaskItem $w={58} $ml={4} $state="open">
        <svg width="34" height="32" viewBox="0 0 34 32"><path d="M2 4Q2 2 4 2H10L12 4H31V28H2Z" fill="#e9cf7d" /><path d="M5 3h5v2H5z" fill="#2aa54a" /><path d="M12 4h8v3h-8z" fill="#fff" /><path d="M12 4h3v2h-3z" fill="#d8482f" /><path d="M20 6h10v3H20z" fill="#fff" /><path d="M20 6h5v2h-5z" fill="#2a7fd0" /><path d="M1 8H14L16 10H33V28H1Z" fill="#f7e6a4" stroke="#d8bb62" strokeWidth=".6" /><path d="M6 31V21Q6 19 8 19H30Q32 19 32 21V31H26V25H12V31Z" fill="#8fcdec" stroke="#5aa5cf" strokeWidth=".8" /><path d="M3 28l6-12M1 16l12 4" stroke="#fff" strokeWidth=".6" opacity=".8" /></svg>
      </TaskItem>
      <TaskItem $w={30} $ml={18}>
        <svg width="30" height="30" viewBox="0 0 30 30"><path d="M0 0h30v30H0z" fill="#0a8a0a" /><path d="M4 9L25 7.500V26.500L4 24Z" fill="#fff" /><path d="M9 9Q9.500 3.500 13.500 3.500T18 8M13 8Q14 4.500 17 4.500T21 8" fill="none" stroke="#fff" strokeWidth="1.300" /><path d="M7 13.500l4-.4v3.700H7zM12 13l5.500-.5v4.300H12zM7 17.700h4v3.600l-4-.4zM12 17.700h5.500V22L12 21.400z" fill="#0a8a0a" /></svg>
      </TaskItem>
      <TaskItem $w={58} $ml={18} $state="active">
        <svg width="30" height="30" viewBox="0 0 30 30"><circle cx="15" cy="15" r="14.700" fill="#4aa84f" /><path d="M2.300 7.600A14.700 14.700 0 0 1 27.700 7.600L15 15Z" fill="#db4437" /><path d="M27.700 7.600A14.700 14.700 0 0 1 14 29.700L21 17.500 15 7.600Z" fill="#fbcb3c" /><path d="M2.300 7.600L9 18.500 15 15V7.600Z" fill="#db4437" /><path d="M9.200 18.500L2.300 7.600" stroke="#4aa84f" strokeWidth=".5" /><circle cx="15" cy="15" r="6.800" fill="#fff" /><circle cx="15" cy="15" r="5.500" fill="#4a87ee" /></svg>
      </TaskItem>
      <TaskItem $w={58} $ml={4} $state="open">
        <svg width="32" height="32" viewBox="0 0 32 32"><path d="M4 1L28 3 25 22 1 19Z" fill="#e4e6ea" /><path d="M5.500 2.500L26 4.300 23.500 20.300 3 17.500Z" fill="#1017c4" /><path d="M14 3.200L26 4.300 24.500 13Z" fill="#5d77f2" /><path d="M10 21l6 1v3h-6Z" fill="#b9bcc2" /><ellipse cx="12" cy="27" rx="8" ry="3.300" fill="#d8dadd" /><circle cx="23.500" cy="24" r="7" fill="#e9e9e9" stroke="#8c8c8c" /><path d="M20 22l3 3-3 3M27 20l-3 3 3 3" fill="none" stroke="#3b9a3b" strokeWidth="1.800" /></svg>
      </TaskItem>
      <TaskItem $w={58} $ml={4} $state="open">
        <svg width="34" height="30" viewBox="0 0 34 30"><rect x="1" y="3.500" width="31" height="20" rx="1" fill="#3d9bd9" stroke="#9ad0ef" /><circle cx="9" cy="12" r="4.500" fill="none" stroke="#d5ecf9" strokeWidth="1.300" /><path d="M9 12V6Q14 6.500 14 11Z" fill="#f7a531" /><path d="M18 8.500h10v3H18zM18 14.500h10v3H18z" fill="#2377b8" stroke="#d5ecf9" /><path d="M6 19.500h3M11 19.500h3" stroke="#f7a531" strokeWidth="1.800" /><ellipse cx="17" cy="25.500" rx="6.500" ry="4.300" fill="#d9dcdf" stroke="#999" strokeWidth=".6" /></svg>
      </TaskItem>
      <TaskItem $w={58} $ml={4} $state="open">
        <svg width="30" height="30" viewBox="0 0 30 30"><path d="M8.500 0Q12 0 14 1.500 28 1 28 15L27.800 17Q30 20 29.500 23 28 30 21 30 19 30 17 28.500 1 29 2 13 -1 9 1 4.500 3.500 0 8.500 0Z" fill="#00aff0" /><text x="15" y="23.500" fontSize="24" fontWeight="700" textAnchor="middle" fill="#fff" fontFamily="Liberation Sans">S</text></svg>
      </TaskItem>
      <Tray>
        <svg width="354" height="34" viewBox="928 0 354 34">
          <circle cx="945" cy="17" r="15.300" fill="#fff" /><circle cx="945" cy="17" r="13" fill="#0b9be0" /><text x="945" y="25" fontSize="23" fontWeight="700" textAnchor="middle" fill="#fff" fontFamily="Liberation Sans">?</text>
          <circle cx="975" cy="17.500" r="8" fill="#e9f2fa" /><circle cx="972" cy="18" r="1.700" fill="#2f7fc4" /><circle cx="977.500" cy="17" r="2.500" fill="#2f7fc4" />
          <path d="M993 10.500q3-2 6-.5 6-.5 6 6 2.500 3 0 6-3 2.500-6 1-6 0-6-6-1.500-4 0-6.500Z" fill="#7fc225" /><path d="M996 16.500l2.500 2.500 4-4.500" fill="none" stroke="#fff" strokeWidth="1.600" />
          <path d="M1015 13h8v6q0 3-4 3t-4-3Z" fill="#777" stroke="#555" /><path d="M1016 9h6v4h-6z" fill="#ccc" stroke="#666" /><circle cx="1025.500" cy="20.500" r="5" fill="#249a35" /><path d="M1023 20.500l2 2 3-4" fill="none" stroke="#fff" strokeWidth="1.400" />
          <path d="M1041 10h13v14h-13z" fill="#f4f4f4" /><path d="M1040 10h4.500v14h-4.500zM1044.500 17l5-7h4.500l-7 8Z" fill="#df2b24" /><path d="M1046 18l3.500 6h4.500l-5-7Z" fill="#444" />
          <path d="M1064 11h14v10h-14zM1068 23h7" fill="#111" stroke="#444" /><path d="M1066 18l2-3 2 2 2-5 2 4 2-2" fill="none" stroke="#58a7f2" strokeWidth="1.200" />
          <rect x="1089.500" y="9.500" width="11" height="15" rx="5" fill="#123f86" /><path d="M1092 13.500l5.500 6L1095 22V12l2.500 2.500-5.500 6" fill="none" stroke="#fff" strokeWidth="1.200" />
          <path d="M1112 14l5-3h9v7l-4 4h-10Z" fill="#c3c6c9" stroke="#888" strokeWidth=".7" /><path d="M1116 18l4 5 7-9" fill="none" stroke="#42b34a" strokeWidth="2.600" />
          <text x="1139" y="16" fontSize="10" fontWeight="700" textAnchor="middle" fill="#fff" stroke="#333" strokeWidth=".4" fontFamily="Liberation Sans">S</text><path d="M1140 15h9v6h-9z" fill="#1d8fc4" /><path d="M1137 24h12" stroke="#ddd" strokeWidth="2" />
          <path d="M1172.500 12.500A6.500 6.500 0 1 0 1172.500 21L1169.500 18.500A3 3 0 1 1 1169.500 14.500Z" fill="#d33a22" /><path d="M1159 22l6-5 3 5-5 3Z" fill="#3a8ed3" /><path d="M1170 9.500l-5 8" stroke="#e05a30" strokeWidth="2" />
          <g stroke="#333" strokeWidth=".7" fill="#fff"><path d="M1184 9h1.800v17h-1.800ZM1186 10.500q3-1.500 6 0 3 1.500 6 .5v6q-3 1-6-.5-3-1.500-6 0Z" />
            <path d="M1207 9.500h1.500v4h3v-4h1.500v4h.5v4h-2.500V25h-2v-7.500h-2.500v-4h.5ZM1216 11h3v1.500h2.500V25h-8V12.500h2.500Z" />
            <path d="M1232 22h2v2.500h-2ZM1235 20h2v4.500h-2ZM1238 17h2v7.500h-2ZM1241 14h2v10.500h-2ZM1244 10.500h2v14h-2Z" />
            <path d="M1256 14.500h2.500L1262.500 10.500V24.500L1258.500 20.500H1256Z" /></g>
          <path d="M1264.500 14.500q2 3 0 6M1266.800 12.500q3.200 5 0 10M1269 10.500q4.500 7 0 14" stroke="#fff" fill="none" strokeWidth="1.100" />
        </svg>
        <Clock><Fit w={27} size={12} font={SEGOE}>17:57</Fit><Fit w={58} size={12} font={SEGOE}>02/09/2016</Fit></Clock>
      </Tray>
    </Taskbar>
  );
}

export default function App() {
  return (
    <>
      <Global />
      <Screen>
        <Browser />
        <Header />
        <SheetTabs>
          <SheetTab $w={87} $pl={11} $pb={6}>
            <svg width="15" height="13" viewBox="0 0 15 13"><path d="M7.500 .5L14.500 7H12.700V12.500H9V8.500H6V12.500H2.300V7H.5Z" fill="#fff" /></svg>
            <StripSpace /><Fit w={41} size={14} bold>Inicial</Fit><TabEnd />
          </SheetTab>
          <SheetTab $w={99} $pl={15}><Fit w={57} size={16} semi>Em aberto</Fit></SheetTab>
          <SheetTab $w={176} $active $pl={8}>
            <MiniDrop $mr={10}><Caret w={8} /></MiniDrop>
            <Fit w={111} size={18} color="#555">Projeto Farmacia</Fit>
            <TabClose width="8" height="10" viewBox="0 0 8 10"><path d="M1 1l6 8M7 1L1 9" stroke="#666" strokeWidth="2.200" /></TabClose>
          </SheetTab>
          <SheetTab $w={35} $pl={10}><svg width="14" height="16" viewBox="0 0 14 16"><path d="M7 0v16M0 8h14" stroke="#fff" strokeWidth="3.600" /></svg></SheetTab>
        </SheetTabs>
        <Workspace>
          <Tools />
          <Sheet>
            <SheetTop />
            <Panes><GridSide /><Divider /><Gantt /></Panes>
          </Sheet>
        </Workspace>
        <Bottom />
        <WindowsBar />
      </Screen>
    </>
  );
}
